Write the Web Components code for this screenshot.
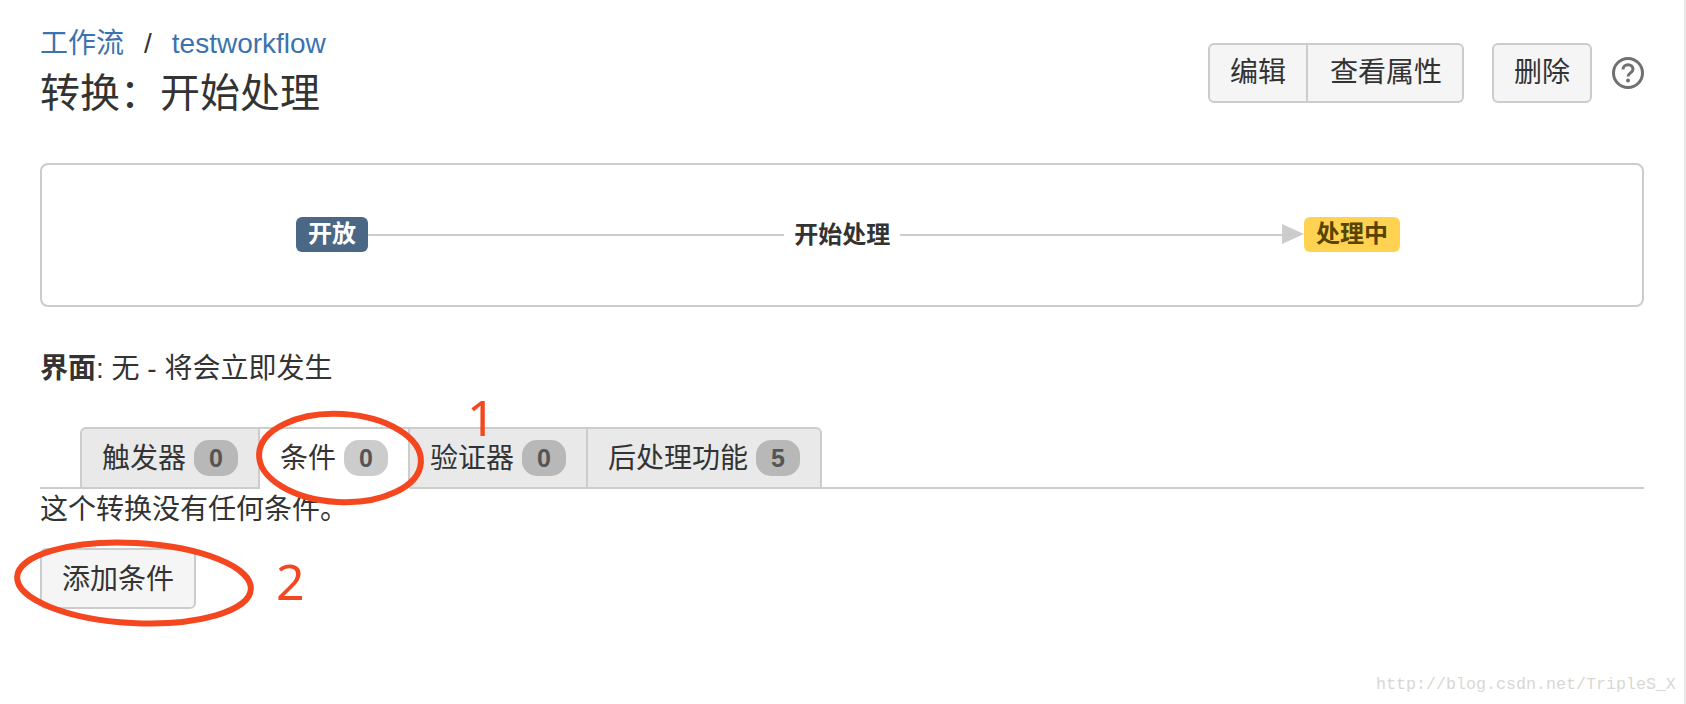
<!DOCTYPE html>
<html lang="zh"><head><meta charset="utf-8"><title>转换</title>
<style>
html,body{margin:0;padding:0;background:#fff;height:100%}
body{font-family:"Liberation Sans","Noto Sans CJK SC",sans-serif;color:#333;font-size:28px}
</style></head><body>
<wf-page></wf-page>
<script>
function def(name, css, html){
  customElements.define(name, class extends HTMLElement{
    constructor(){super();const s=this.attachShadow({mode:'open'});s.innerHTML='<style>'+css+'</style>'+html;}
  });
}
def('wf-button',`
:host{display:block}
div{box-sizing:border-box;padding:0 20px;display:flex;align-items:center;background:#f5f5f5;border:2px solid #ccc;border-radius:6px;font-size:28px;line-height:1;color:#333;height:100%;white-space:nowrap}
:host([group=first]) div{border-radius:6px 0 0 6px}
:host([group=last]) div{border-radius:0 6px 6px 0;border-left:0;padding-left:22px}
:host(.add) div{padding-top:3px}
`,`<div><slot></slot></div>`);
def('wf-status',`
:host{display:block;margin-top:-2px}
div{box-sizing:border-box;height:35px;padding:0 12px;display:flex;align-items:center;border-radius:6px;font-size:24px;font-weight:700;line-height:1;white-space:nowrap}
:host([kind=open]) div{background:#4a6785;color:#fff}
:host([kind=progress]) div{background:#ffd351;color:#594300}
`,`<div><slot></slot></div>`);
def('wf-tab',`
:host{display:block;box-sizing:border-box;height:62px;margin-bottom:-2px;background:#e9e9e9;border:2px solid #ccc;border-left-width:0;padding:0 20px 0 20px;}
:host([first]){border-left-width:2px;border-top-left-radius:6px}
:host([last]){border-top-right-radius:6px}
:host([active]){background:#fff;border-bottom-color:#fff}
div{height:100%;display:flex;align-items:center;gap:8px;font-size:28px;line-height:1;color:#333;white-space:nowrap}
span{position:relative;top:1px}
b{box-sizing:border-box;min-width:44px;height:36px;border-radius:15px;background:#b8b8b8;color:#555;font-size:25px;font-weight:700;display:flex;align-items:center;justify-content:center;font-family:"Liberation Sans",sans-serif}
:host([active]) b{background:#ccc}
`,`<div><span><slot></slot></span><b></b></div>`);
def('wf-page',`
:host{display:block;position:relative;box-sizing:border-box;width:1686px;height:704px;padding:27px 40px 0 40px;border-right:2px solid #e8e8e8;overflow:hidden;font-family:"Liberation Sans","Noto Sans CJK SC",sans-serif;color:#333}
a{color:#3b73af;text-decoration:none}
header{display:flex;justify-content:space-between;height:94px;margin-bottom:42px}
.crumb{font-size:28px;line-height:34px;display:flex;gap:20px}
h1{margin:4px 0 0;font-size:40px;font-weight:400;line-height:56px}
.actions{display:flex;align-items:center;height:60px;margin-top:16px}
.group{display:flex;height:100%}
.del{height:100%;margin-left:28px}
.help{margin-left:20px;display:block}
.panel{box-sizing:border-box;height:144px;border:2px solid #ccc;border-radius:8px;display:flex;align-items:center;padding:0 242px 0 254px}
.line{height:2px;background:#ccc}
.l1{flex:387}
.l2{flex:355}
.lbl{font-size:24px;font-weight:700;line-height:1;margin:0 10px;white-space:nowrap}
.arrow{display:block;margin-top:-2px}
.screen{font-size:28px;line-height:40px;margin:42px 0 38px}
.tabs{display:flex;height:60px;padding-left:40px;border-bottom:2px solid #ccc}
.none{font-size:28px;line-height:40px;margin-top:1px}
.add{display:block;width:156px;height:61px;margin-top:18px}
.ann{position:absolute;left:0;top:0;pointer-events:none}
.num{position:absolute;color:#f4461f;font-size:50px;line-height:40px;font-family:"Noto Sans","Liberation Sans",sans-serif}
.mark{position:absolute;left:1376px;top:675px;font-family:"Liberation Mono",monospace;font-size:16.67px;line-height:20px;color:#d8d8d0;white-space:nowrap}
`,`
<header>
  <div>
    <div class="crumb"><a href="#">工作流</a><span>/</span><a href="#">testworkflow</a></div>
    <h1>转换：开始处理</h1>
  </div>
  <div class="actions">
    <div class="group"><wf-button group="first">编辑</wf-button><wf-button group="last">查看属性</wf-button></div>
    <wf-button class="del">删除</wf-button>
    <svg class="help" width="32" height="32" viewBox="0 0 32 32" fill="none"><circle cx="16" cy="16" r="14.5" stroke="#707070" stroke-width="3"/><path d="M11 12.5c0-3 2.3-4.7 5-4.7s5 1.7 5 4.4c0 3.6-5 3.7-5 7.3" stroke="#707070" stroke-width="3"/><circle cx="16" cy="23.6" r="2" fill="#707070"/></svg>
  </div>
</header>
<section class="panel">
  <wf-status kind="open">开放</wf-status>
  <div class="line l1"></div>
  <span class="lbl">开始处理</span>
  <div class="line l2"></div>
  <svg class="arrow" width="22" height="20" viewBox="0 0 22 20"><path d="M0 0L22 10L0 20Z" fill="#ccc"/></svg>
  <wf-status kind="progress">处理中</wf-status>
</section>
<div class="screen"><b>界面</b>: 无 - 将会立即发生</div>
<nav class="tabs">
  <wf-tab first data-n="0">触发器</wf-tab>
  <wf-tab active data-n="0">条件</wf-tab>
  <wf-tab data-n="0">验证器</wf-tab>
  <wf-tab last data-n="5">后处理功能</wf-tab>
</nav>
<div class="none">这个转换没有任何条件。</div>
<wf-button class="add">添加条件</wf-button>
<svg class="ann" width="1686" height="704" fill="none" stroke="#f4461f" stroke-width="6">
  <ellipse cx="340" cy="458" rx="81" ry="44" transform="rotate(3 340 458)"/>
  <ellipse cx="134" cy="583" rx="117" ry="40" transform="rotate(3 134 583)"/>
</svg>
<span class="num" style="left:467px;top:397px">1</span>
<span class="num" style="left:276px;top:561px">2</span>
<span class="mark">http://blog.csdn.net/TripleS_X</span>
`);
document.querySelector('wf-page').shadowRoot.querySelectorAll('wf-tab').forEach(t=>{t.shadowRoot.querySelector('b').textContent=t.dataset.n;});
</script>
</body></html>
